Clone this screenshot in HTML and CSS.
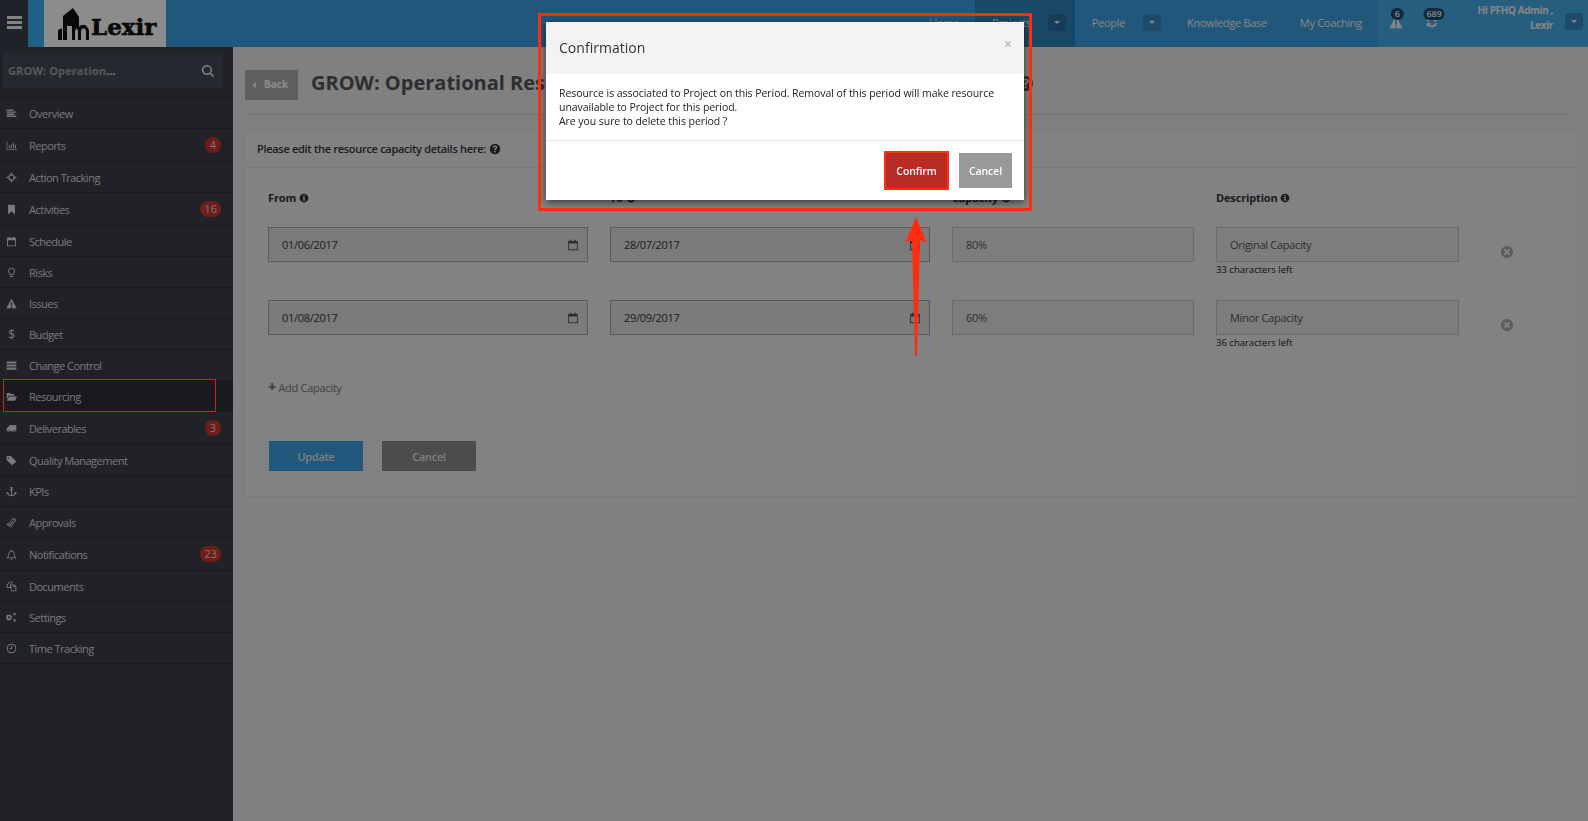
FILE: index.html
```html
<!DOCTYPE html>
<html lang="en">
<head>
  <meta charset="UTF-8" />
  <title>Lexir - Resource capacity</title>
  <link rel="stylesheet" href="styles.css">
</head>
<body>
  <svg class="defs" width="0" height="0">
    <symbol id="i-overview" viewBox="0 0 16 16"><path d="M1 2h10v2H1zM1 5h14v2H1zM1 8h11v2H1zM1 11h14v2H1z"/></symbol>
    <symbol id="i-chart" viewBox="0 0 16 16"><path d="M1 2h1v11h14v1H1zM4 8h1.500v4H4zM7 6h1.500v6H7zM10 4h1.500v8H10zM13 7h1.500v5H13z"/></symbol>
    <symbol id="i-target" viewBox="0 0 16 16"><path fill-rule="evenodd" d="M7 1h2v2.200A5 5 0 0 1 12.800 7H15v2h-2.200A5 5 0 0 1 9 12.800V15H7v-2.200A5 5 0 0 1 3.200 9H1V7h2.200A5 5 0 0 1 7 3.200zM8 5a3 3 0 1 0 0 6 3 3 0 0 0 0-6z"/></symbol>
    <symbol id="i-bookmark" viewBox="0 0 16 16"><path d="M3 1h10v14l-5-4-5 4z"/></symbol>
    <symbol id="i-calendar" viewBox="0 0 16 16"><path fill-rule="evenodd" d="M4 1h2v1.500h4V1h2v1.500h2.500V15h-13V2.500H4zM2.800 6v7.800h10.400V6z"/></symbol>
    <symbol id="i-bulb" viewBox="0 0 16 16"><path fill-rule="evenodd" d="M8 1a5 5 0 0 1 3 9l-.6 2H5.600L5 10a5 5 0 0 1 3-9zm0 1.300a3.700 3.700 0 0 0-2 6.800l.6 1.600h2.800l.6-1.600a3.700 3.700 0 0 0-2-6.800zM6 13h4v1l-1 1H7l-1-1z"/></symbol>
    <symbol id="i-warn" viewBox="0 0 16 16"><path fill-rule="evenodd" d="M8 1l7.500 14H.5zM7 6v5h2V6zm0 6v2h2v-2z"/></symbol>
    <symbol id="i-server" viewBox="0 0 16 16"><path d="M1 2h14v3H1zM1 6.500h14v3H1zM1 11h14v3H1z"/></symbol>
    <symbol id="i-folder" viewBox="0 0 16 16"><path d="M1 3h5l1 1.500h5V7H4L1 12zM4.500 8H16l-3 6H1z"/></symbol>
    <symbol id="i-truck" viewBox="0 0 16 16"><path d="M5 3h10v9h-1.500a1.800 1.800 0 0 0-3.500 0H6.500a1.800 1.800 0 0 0-3.500 0H1V8l2-3h2zM4.700 11.500a1 1 0 1 1 0 2 1 1 0 0 1 0-2zM11.700 11.500a1 1 0 1 1 0 2 1 1 0 0 1 0-2z"/></symbol>
    <symbol id="i-tag" viewBox="0 0 16 16"><path fill-rule="evenodd" d="M1 1.500h6L15 9.500 9 15 1 7.500zM4 3.500a1 1 0 1 0 0 2 1 1 0 0 0 0-2z"/></symbol>
    <symbol id="i-anchor" viewBox="0 0 16 16"><path fill-rule="evenodd" d="M8 1a1.700 1.700 0 0 1 .8 3.200V5H11v1.300H8.800v7a4.600 4.600 0 0 0 4-3l-1-.8L15 8.700 15.300 12l-1-.7C13.200 13.500 11 15 8 15s-5.200-1.500-6.300-3.700l-1 .7L1 8.700l3.200.8-1 .8a4.600 4.600 0 0 0 4 3v-7H5V5h2.200v-.8A1.700 1.700 0 0 1 8 1z"/></symbol>
    <symbol id="i-clip" viewBox="0 0 16 16"><path d="M10 1l5 3.500-7.500 10.500L1 11.500 3 8l1 .7-1.300 2.300 4.500 2.500L13 5 10 3 5 9.500l1.200.8L10 5.500l1 .7L6.500 12.300 3.500 10z"/></symbol>
    <symbol id="i-bell" viewBox="0 0 16 16"><path fill-rule="evenodd" d="M8 1a1 1 0 0 1 1 1v.6A4.500 4.500 0 0 1 12.500 7c0 3 1 4.500 2.500 5.500v1H1v-1C2.500 11.500 3.500 10 3.500 7A4.500 4.500 0 0 1 7 2.600V2a1 1 0 0 1 1-1zm0 2.700A3.300 3.300 0 0 0 4.700 7c0 2.300-.6 4-1.500 5.300h9.600c-.9-1.300-1.500-3-1.500-5.300A3.300 3.300 0 0 0 8 3.700zM6.500 14.300h3a1.500 1.500 0 0 1-3 0z"/></symbol>
    <symbol id="i-copy" viewBox="0 0 16 16"><path fill-rule="evenodd" d="M5 1h4l1 1-3 3v5H1V5zM2.200 6v2.800h3.600V5.500L8 3V2.200H5.500zM8 5h4l3 3v7H7V6zm0 1.200v7.600h5.800V9H11V6.200z"/></symbol>
    <symbol id="i-cogs" viewBox="0 0 16 16"><path fill-rule="evenodd" d="M5 4l1.300.5 1-.5.8.8-.5 1 .5 1.200H9v1.500l-1 .4-.4 1 .5 1-.9.9-1-.5-1 .4-.4 1H3.800l-.4-1-1-.4-1 .5-.8-.9.5-1-.4-1L0 8.500V7l.9-.3.4-1-.5-1 .9-.9 1 .5 1-.4zM4.500 6a1.700 1.700 0 1 0 0 3.500 1.700 1.700 0 0 0 0-3.500zM12.500 1a2 2 0 1 1 0 4 2 2 0 0 1 0-4zm0 1.300a.7.7 0 1 0 0 1.400.7.7 0 0 0 0-1.400zM12.500 10a2 2 0 1 1 0 4 2 2 0 0 1 0-4zm0 1.300a.7.7 0 1 0 0 1.400.7.7 0 0 0 0-1.400z"/></symbol>
    <symbol id="i-clock" viewBox="0 0 16 16"><path fill-rule="evenodd" d="M8 1a7 7 0 1 1 0 14A7 7 0 0 1 8 1zm0 1.500a5.500 5.500 0 1 0 0 11 5.500 5.500 0 0 0 0-11zM7.300 4.500h1.400V9H5V7.700h2.300z"/></symbol>
    <symbol id="i-info" viewBox="0 0 16 16"><path fill-rule="evenodd" d="M8 1a7 7 0 1 1 0 14A7 7 0 0 1 8 1zM6.800 3.300v2h2.400v-2zM6 6.500v1.300h.9v2.900H6V12h4v-1.300h-.9V6.500z"/></symbol>
    <symbol id="i-help" viewBox="0 0 16 16"><path fill-rule="evenodd" d="M8 1a7 7 0 1 1 0 14A7 7 0 0 1 8 1zM7 10.500v2h2v-2zM8 3.300c-1.700 0-2.900.8-3.200 2.300l1.700.5c.2-.8.700-1.100 1.400-1.100.6 0 1.100.3 1.100.8 0 .4-.3.700-.9 1.100-.8.500-1.100 1-1.100 1.800v.8h2v-.5c0-.4.200-.6.800-1 .8-.5 1.300-1.200 1.300-2.200 0-1.500-1.300-2.500-3.100-2.500z"/></symbol>
    <symbol id="i-remove" viewBox="0 0 16 16"><path fill-rule="evenodd" d="M8 1a7 7 0 1 1 0 14A7 7 0 0 1 8 1zM5.800 4.300L4.300 5.800 6.500 8l-2.200 2.200 1.500 1.500L8 9.500l2.200 2.200 1.500-1.500L9.500 8l2.200-2.200-1.500-1.500L8 6.500z"/></symbol>
    <symbol id="i-refresh" viewBox="0 0 16 16"><path d="M8 2a6 6 0 0 1 4.300 1.800L14 2v5H9l1.800-1.800A3.600 3.600 0 0 0 4.600 7H2.100A6 6 0 0 1 8 2zM2 9h5l-1.800 1.800a3.600 3.600 0 0 0 6.200-1.800h2.500A6 6 0 0 1 3.700 12.200L2 14z"/></symbol>
    <symbol id="i-search" viewBox="0 0 16 16"><path fill-rule="evenodd" d="M6.800 1a5.800 5.800 0 0 1 4.600 9.300l3.600 3.500-1.300 1.300-3.500-3.600A5.800 5.800 0 1 1 6.800 1zm0 1.800a4 4 0 1 0 0 8 4 4 0 0 0 0-8z"/></symbol>
  </svg>

  <header class="topbar">
    <a class="menu-toggle"><span></span><span></span><span></span></a>
    <div class="logo">
      <svg class="logo-mark" viewBox="0 0 32 32"><path d="M0 22l4-2v12H0zM5 32V8l10-8 6 9v10c2-3 7-3 8 0 2 2 2 3 2 5v8h-3v-8c0-3-2-5-4-3-1 1-1 2-1 3v8h-3V24c0-2-1-4-2-3-1 1-1 2-1 3v8h-3V18H9v14z"/></svg>
      <span class="logo-name">Lexir</span>
    </div>
    <nav class="main-nav">
      <a class="nav-link">Home</a>
      <a class="nav-link nav-active">Projects <span class="caret-btn"></span></a>
      <a class="nav-link nav-people">People <span class="caret-btn"></span></a>
      <a class="nav-link">Knowledge Base</a>
      <a class="nav-link">My Coaching</a>
    </nav>
    <div class="user-zone">
      <span class="alert-icon"><svg class="icon-14"><use href="#i-warn"/></svg><b class="count">6</b></span>
      <span class="alert-icon"><svg class="icon-14"><use href="#i-refresh"/></svg><b class="count">689</b></span>
      <div class="user-name">Hi PFHQ Admin ,<br>Lexir</div>
      <span class="caret-btn"></span>
    </div>
  </header>

  <div class="layout">
    <aside class="sidebar">
      <div class="search-wrap">
        <div class="search-box">
          <span>GROW: Operation<i class="dots">...</i></span>
          <svg class="icon-13"><use href="#i-search"/></svg>
        </div>
      </div>
      <ul class="side-menu">
        <li><svg><use href="#i-overview"/></svg>Overview</li>
        <li class="has-badge"><svg><use href="#i-chart"/></svg>Reports<b class="badge">4</b></li>
        <li><svg><use href="#i-target"/></svg>Action Tracking</li>
        <li class="has-badge"><svg><use href="#i-bookmark"/></svg>Activities<b class="badge">16</b></li>
        <li><svg><use href="#i-calendar"/></svg>Schedule</li>
        <li><svg><use href="#i-bulb"/></svg>Risks</li>
        <li><svg><use href="#i-warn"/></svg>Issues</li>
        <li><span class="dollar">$</span>Budget</li>
        <li><svg><use href="#i-server"/></svg>Change Control</li>
        <li class="active"><svg><use href="#i-folder"/></svg>Resourcing</li>
        <li class="has-badge"><svg><use href="#i-truck"/></svg>Deliverables<b class="badge">3</b></li>
        <li><svg><use href="#i-tag"/></svg>Quality Management</li>
        <li><svg><use href="#i-anchor"/></svg>KPIs</li>
        <li><svg><use href="#i-clip"/></svg>Approvals</li>
        <li class="has-badge"><svg><use href="#i-bell"/></svg>Notifications<b class="badge">23</b></li>
        <li><svg><use href="#i-copy"/></svg>Documents</li>
        <li><svg><use href="#i-cogs"/></svg>Settings</li>
        <li><svg><use href="#i-clock"/></svg>Time Tracking</li>
      </ul>
    </aside>

    <main class="content">
      <div class="page-head">
        <a class="back-btn"><span class="back-arrow"></span>Back</a>
        <h1>GROW: Operational Resource Capacity</h1>
        <svg class="title-help"><use href="#i-help"/></svg>
      </div>

      <section class="panel">
        <div class="panel-head">Please edit the resource capacity details here: <svg class="icon-12"><use href="#i-help"/></svg></div>
        <div class="panel-body">
          <div class="capacity-grid">
            <label>From <svg class="icon-10"><use href="#i-info"/></svg></label>
            <label>To <svg class="icon-10"><use href="#i-info"/></svg></label>
            <label>Capacity <svg class="icon-10"><use href="#i-info"/></svg></label>
            <label>Description <svg class="icon-10"><use href="#i-info"/></svg></label>
            <span></span>

            <div class="field date">01/06/2017<svg class="icon-11"><use href="#i-calendar"/></svg></div>
            <div class="field date">28/07/2017<svg class="icon-11"><use href="#i-calendar"/></svg></div>
            <div class="field light">80%</div>
            <div class="desc-cell">
              <div class="field light">Original Capacity</div>
              <small>33 characters left</small>
            </div>
            <svg class="remove"><use href="#i-remove"/></svg>

            <div class="field date">01/08/2017<svg class="icon-11"><use href="#i-calendar"/></svg></div>
            <div class="field date">29/09/2017<svg class="icon-11"><use href="#i-calendar"/></svg></div>
            <div class="field light">60%</div>
            <div class="desc-cell">
              <div class="field light">Minor Capacity</div>
              <small>36 characters left</small>
            </div>
            <svg class="remove"><use href="#i-remove"/></svg>
          </div>

          <a class="add-link"><span class="plus">+</span> Add Capacity</a>

          <div class="form-actions">
            <a class="btn btn-update">Update</a>
            <a class="btn btn-back">Cancel</a>
          </div>
        </div>
      </section>
    </main>
  </div>

  <div class="backdrop"></div>

  <div class="modal">
    <div class="modal-head">
      <h2>Confirmation</h2>
      <span class="modal-close">&times;</span>
    </div>
    <div class="modal-body">
      Resource is associated to Project on this Period. Removal of this period will make resource unavailable to Project for this period.<br>
      Are you sure to delete this period ?
    </div>
    <div class="modal-foot">
      <a class="btn-confirm">Confirm</a>
      <a class="btn-dismiss">Cancel</a>
    </div>
  </div>

  <!-- annotations drawn on top of the screenshot -->
  <div class="mark mark-modal"></div>
  <div class="mark mark-menu"></div>
  <svg class="mark-arrow" viewBox="0 0 24 140">
    <path d="M12 0L23 26 16 23 13 139 11 139 8 23 1 26z"/>
  </svg>
</body>
</html>
```

FILE: styles.css
```css
* {
  box-sizing: border-box;
}

html, body {
  margin: 0;
  padding: 0;
  height: 100%;
  overflow: hidden;
}

body {
  font-family: "Open Sans", sans-serif;
  font-size: 11px;
  color: #333;
  background: #e7e9eb;
}

.defs {
  position: absolute;
}

svg {
  fill: currentColor;
}

.icon-10 { width: 10px; height: 10px; vertical-align: -1px; }
.icon-11 { width: 12px; height: 12px; }
.icon-12 { width: 12px; height: 12px; vertical-align: -2px; }
.icon-13 { width: 14px; height: 14px; }
.icon-14 { width: 14px; height: 14px; }

/* top bar */
.topbar {
  display: flex;
  height: 47px;
  background: #3c9ede;
}

.menu-toggle {
  width: 28px;
  background: #3a3e49;
  display: flex;
  flex-direction: column;
  justify-content: center;
  align-items: center;
  gap: 2.500px;
  padding-bottom: 2px;
}

.menu-toggle span {
  width: 15px;
  height: 2.500px;
  background: #eee;
}

.logo {
  width: 138px;
  border-left: 16px solid #3fadf2;
  background: #fff;
  display: flex;
  align-items: center;
  padding-left: 14px;
  color: #111;
}

.logo-mark {
  width: 32px;
  height: 32px;
  margin-top: 1px;
}

.logo-name {
  font-family: "DejaVu Serif", serif;
  font-weight: 700;
  font-size: 23px;
  -webkit-text-stroke: 0.6px #111;
  margin-left: 1px;
  margin-top: 6px;
}

.main-nav {
  margin-left: auto;
  display: flex;
  font-size: 11px;
  letter-spacing: -0.3px;
}

.nav-link {
  display: flex;
  align-items: center;
  padding: 0 16px 3px 17px;
  color: #f4f4f4;
}

.nav-link .caret-btn {
  margin-left: 17px;
  margin-right: -7px;
}

.nav-people .caret-btn {
  margin-left: 18px;
}

.nav-active {
  background: #2f83ba;
}

.caret-btn {
  width: 18px;
  height: 17px;
  border-radius: 3px;
  background: #3589c0;
  display: inline-flex;
  align-items: center;
  justify-content: center;
}

.nav-active .caret-btn {
  background: #276f9f;
}

.caret-btn::after {
  content: "";
  border: 3px solid transparent;
  border-top: 3px solid #f0f0f0;
  margin-top: 3px;
}

.user-zone {
  width: 210px;
  display: flex;
  align-items: center;
  padding: 0 5px 4px 11px;
  background: #45abe9;
  color: #f4f4f4;
}

.alert-icon {
  position: relative;
  width: 14px;
  height: 14px;
  margin: 1px 22px 0 0;
  display: flex;
}

.count {
  position: absolute;
  top: -7px;
  left: 50%;
  min-width: 13px;
  height: 12px;
  padding: 0 3px;
  border-radius: 6px;
  background: #1d4d70;
  color: #f4f4f4;
  font-size: 9px;
  font-weight: 600;
  line-height: 12px;
  text-align: center;
  transform: translateX(-40%);
}

.user-name {
  margin: 0 12px 8px auto;
  text-align: right;
  font-weight: 700;
  font-size: 10px;
  line-height: 15px;
  letter-spacing: -0.4px;
}

/* layout */
.layout {
  display: flex;
  height: calc(100% - 47px);
}

.sidebar {
  width: 233px;
  flex: none;
  background: #3b3e48;
  color: #dcdcdc;
}

.search-wrap {
  height: 51px;
  padding: 6px 10px 10px 3px;
  border-bottom: 1px solid #2a2c33;
}

.search-box {
  height: 35px;
  background: #454a58;
  display: flex;
  align-items: center;
  justify-content: space-between;
  padding: 0 8px 0 5px;
  font-size: 11px;
  font-weight: 700;
  color: #a2a2a2;
  letter-spacing: 0.1px;
}

.search-box svg {
  color: #eee;
}

.dots {
  font-style: normal;
  color: #eee;
}

.side-menu {
  list-style: none;
  margin: 0;
  padding: 0;
}

.side-menu li {
  height: 31px;
  display: flex;
  align-items: center;
  border-bottom: 1px solid #2a2c33;
  font-size: 11px;
  letter-spacing: -0.5px;
}

.side-menu li.has-badge {
  height: 33px;
}

.side-menu li.active {
  background: #2e3038;
}

.side-menu svg,
.side-menu .dollar {
  width: 11px;
  height: 11px;
  margin: 0 12px 0 6px;
  flex: none;
  text-align: center;
  line-height: 11px;
  font-size: 12px;
}

.badge {
  margin-left: auto;
  margin-right: 12px;
  min-width: 16px;
  height: 16px;
  padding: 0 4px;
  border-radius: 8px;
  background: #cc352b;
  font-weight: 400;
  font-size: 11px;
  line-height: 16px;
  text-align: center;
  letter-spacing: 0;
}

/* main content */
.content {
  flex: 1;
  padding: 23px 20px 0 12px;
}

.page-head {
  height: 45px;
  display: flex;
  align-items: flex-start;
  border-bottom: 1px solid #cfd0d2;
}

.back-btn {
  width: 53px;
  height: 30px;
  display: flex;
  align-items: center;
  padding: 0 0 2px 7px;
  background: #acacac;
  color: #fff;
  font-weight: 700;
  font-size: 10px;
}

.back-arrow {
  border: 3px solid transparent;
  border-right: 4px solid #f0f0f0;
  border-left: 0;
  margin: 2px 8px 0 0;
}

.page-head h1 {
  margin: 1px 0 0 13px;
  width: 706px;
  font-size: 20px;
  font-weight: 700;
  line-height: 24px;
  color: #555;
  white-space: nowrap;
}

.title-help {
  width: 17px;
  height: 17px;
  margin-top: 5px;
  color: #555;
}

.panel {
  margin: 16px -8px 0 0;
  background: #ecedee;
  box-shadow: 0 1px 2px rgba(0, 0, 0, 0.06);
}

.panel-head {
  height: 37px;
  display: flex;
  align-items: center;
  gap: 3px;
  padding: 0 0 1px 12px;
  font-weight: 600;
  letter-spacing: -0.3px;
  border-bottom: 1px solid #dcdddf;
}

.panel-body {
  padding: 22px 23px 25px;
}

.capacity-grid {
  display: grid;
  grid-template-columns: 320px 320px 242px 243px 1fr;
  column-gap: 22px;
}

.capacity-grid label {
  font-weight: 700;
  height: 37px;
  line-height: 15px;
  letter-spacing: -0.15px;
}

.field {
  height: 35px;
  display: flex;
  align-items: center;
  justify-content: space-between;
  padding: 0 8px 0 13px;
  background: #e0e0e0;
  border: 1px solid #a6a6a6;
  color: #333;
  letter-spacing: -0.3px;
}

.field svg {
  color: #555;
}

.field.light {
  background: #e3e3e3;
  border-color: #c2c2c2;
  color: #555;
}

.desc-cell {
  height: 73px;
}

.desc-cell small {
  display: block;
  margin-top: 1px;
  font-size: 9.500px;
  color: #222;
}

.remove {
  width: 14px;
  height: 14px;
  margin: 18px 0 0 19px;
  color: #a8a8a8;
}

.add-link {
  display: block;
  margin-top: 5px;
  color: #777;
  line-height: 17px;
  letter-spacing: -0.3px;
}

.plus {
  font-weight: 800;
  font-size: 14px;
}

.form-actions {
  display: flex;
  gap: 19px;
  margin: 45px 0 0 1px;
}

.btn {
  width: 94px;
  height: 30px;
  display: flex;
  align-items: center;
  justify-content: center;
  color: #e6e6e6;
  font-weight: 600;
  letter-spacing: -0.3px;
}

.btn-update {
  background: #3c9ede;
}

.btn-back {
  background: #8a8a8a;
}

/* modal */
.backdrop {
  position: fixed;
  inset: 0;
  background: rgba(0, 0, 0, 0.45);
}

.modal {
  position: fixed;
  top: 22px;
  left: 546px;
  width: 478px;
  height: 178px;
  display: flex;
  flex-direction: column;
  background: #fff;
  box-shadow: 0 2px 8px rgba(0, 0, 0, 0.6);
}

.modal-head {
  height: 52px;
  display: flex;
  align-items: center;
  justify-content: space-between;
  padding: 0 12px 2px 13px;
  background: #f3f3f3;
}

.modal-head h2 {
  margin: 0;
  font-size: 14px;
  font-weight: 400;
  color: #333;
  letter-spacing: 0.03px;
}

.modal-close {
  margin-top: -7px;
  font-size: 14px;
  font-weight: 700;
  color: #bbb;
}

.modal-body {
  height: 67px;
  padding: 12px 13px 0;
  line-height: 14px;
  font-size: 10.500px;
  letter-spacing: -0.06px;
  color: #222;
  border-bottom: 1px solid #e2e2e2;
}

.modal-foot {
  flex: 1;
  display: flex;
  justify-content: flex-end;
  align-items: center;
  gap: 12px;
  padding-right: 12px;
}

.btn-confirm,
.btn-dismiss {
  display: flex;
  align-items: center;
  justify-content: center;
  height: 35px;
  color: #fff;
  font-weight: 600;
  font-size: 10.500px;
  letter-spacing: -0.1px;
}

.btn-confirm {
  width: 61px;
  background: #b92c25;
  outline: 2px solid #ff3010;
}

.btn-dismiss {
  width: 53px;
  background: #999;
}

/* annotations */
.mark {
  position: fixed;
  border: 2px solid #ff2d0d;
}

.mark-modal {
  top: 13px;
  left: 538px;
  width: 494px;
  height: 198px;
  border-width: 3px;
}

.mark-menu {
  top: 379px;
  left: 3px;
  width: 213px;
  height: 33px;
  border-width: 1px;
  border-color: #c8281a;
}

.mark-arrow {
  position: fixed;
  top: 217px;
  left: 904px;
  width: 24px;
  height: 140px;
  fill: #ff2d0d;
}
```
